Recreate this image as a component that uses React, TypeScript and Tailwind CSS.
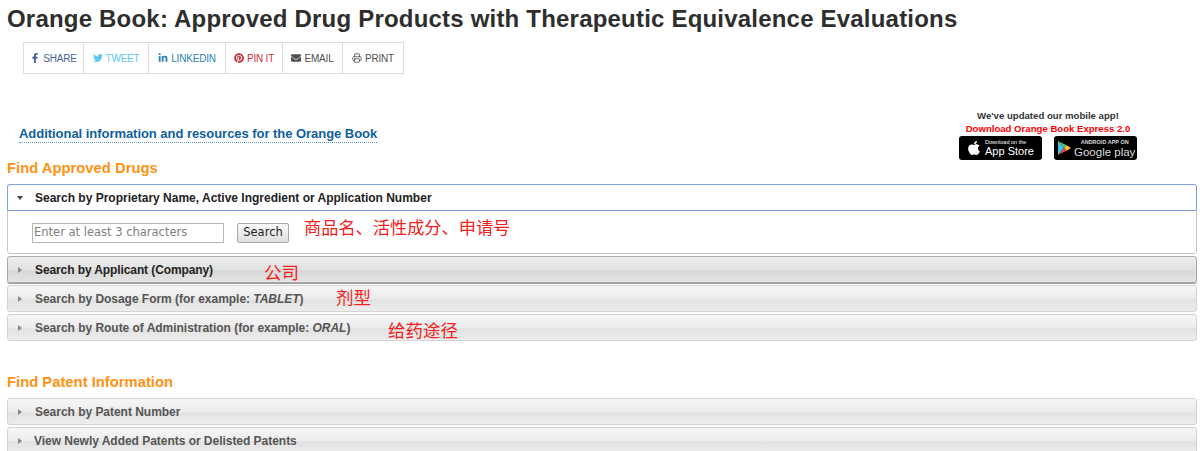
import React from "react";
import { FaApple, FaEnvelope, FaFacebookF, FaLinkedinIn, FaPinterest, FaTwitter } from "react-icons/fa";
import { Printer } from "lucide-react";

const shares = [
  { label: "SHARE", icon: FaFacebookF, color: "text-[#4a6096]", width: "w-[59px]" },
  { label: "TWEET", icon: FaTwitter, color: "text-[#5ec8f0]", width: "w-[65px]" },
  { label: "LINKEDIN", icon: FaLinkedinIn, color: "text-[#2a7fb5]", width: "w-[77px]" },
  { label: "PIN IT", icon: FaPinterest, color: "text-[#cb2f3a]", width: "w-[57px]" },
  { label: "EMAIL", icon: FaEnvelope, color: "text-[#505050]", width: "w-[60px]" },
  { label: "PRINT", icon: Printer, color: "text-[#505050]", width: "w-[61px]" },
];

const Row = ({ children, note, noteClass, hover }: { children: React.ReactNode; note?: string; noteClass?: string; hover?: boolean }) => (
  <div
    className={`relative flex h-[27px] items-center rounded-[3px] border pl-[10px] text-[12px] font-bold tracking-[-0.03px] ${
      hover
        ? "border-[#aaaaaa] bg-[linear-gradient(#ececec_0%,#e2e2e2_50%,#d8d8d8_55%,#e4e4e4_100%)] text-[#222222] shadow-[0_1px_0_#999999]"
        : "border-[#d3d3d3] bg-[linear-gradient(#f6f6f6_0%,#ececec_50%,#e2e2e2_55%,#ededed_100%)] text-[#555555]"
    }`}
  >
    <span className="mr-[13px] h-0 w-0 border-y-[3.5px] border-l-[4px] border-y-transparent border-l-[#888888]" />
    {children}
    {note && <span className={`absolute font-['Noto_Sans_CJK_SC',sans-serif] text-[17.5px] font-normal leading-none text-[#f42020] ${noteClass}`}>{note}</span>}
  </div>
);

export default function App() {
  return (
    <div className="h-[451px] overflow-hidden bg-white pl-[7px] pr-[3px] font-['Liberation_Sans',sans-serif] text-[#333333]">
      <h1 className="pt-[5px] text-[24px] font-bold leading-[28px] tracking-[0.2px] text-[#2e2e2e]">
        Orange Book: Approved Drug Products with Therapeutic Equivalence Evaluations
      </h1>

      <div className="ml-[16px] mt-[9px] flex h-[32px] w-[381px] border border-[#dddddd]">
        {shares.map((s, i) => (
          <div key={s.label} className={`flex items-center justify-center gap-[3px] text-[10px] tracking-[-0.2px] ${s.color} ${s.width} ${i > 0 ? "border-l border-[#dddddd]" : ""}`}>
            <s.icon className="h-[10px] w-[10px]" />
            <span>{s.label}</span>
          </div>
        ))}
      </div>

      <div className="flex items-start justify-between">
        <a className="ml-[12px] mt-[51px] border-b border-dotted border-[#5c9bd1] text-[13px] font-bold leading-[17px] tracking-[-0.04px] text-[#0f5f9e]">
          Additional information and resources for the Orange Book
        </a>
        <div className="mr-[60px] mt-[35px] flex w-[178px] flex-col items-center text-[9.6px] font-bold leading-[13px]">
          <div className="text-[#333333]">We've updated our mobile app!</div>
          <div className="text-[#ff0000]">Download Orange Book Express 2.0</div>
          <div className="mt-[1px] flex gap-[12px]">
            <div className="flex h-[24px] w-[83px] items-center gap-[3px] rounded-[3px] bg-black pl-[7px] text-white">
              <FaApple className="text-[16px]" />
              <div className="flex flex-col">
                <span className="text-[5.5px] font-normal leading-[7px]">Download on the</span>
                <span className="text-[11px] font-normal leading-[11px]">App Store</span>
              </div>
            </div>
            <div className="flex h-[24px] w-[83px] items-center gap-[3px] rounded-[3px] bg-black pl-[3px] text-[#dddddd]">
              <svg width="14" height="16" viewBox="0 0 14 16" className="shrink-0">
                <path d="M1 1 L7 8 L1 15 Z" fill="#3bc4e8" />
                <path d="M1 1 L10 5.5 L7 8 Z" fill="#5bc26a" />
                <path d="M1 15 L10 10.5 L7 8 Z" fill="#e8424c" />
                <path d="M10 5.5 L14 8 L10 10.5 L7 8 Z" fill="#f9c23c" />
              </svg>
              <div className="flex flex-col items-center whitespace-nowrap">
                <span className="text-[5.5px] leading-[7px]">ANDROID APP ON</span>
                <span className="text-[11.5px] font-normal leading-[12px]">Google play</span>
              </div>
            </div>
          </div>
        </div>
      </div>

      <h2 className="mt-[-1px] text-[14.8px] font-bold leading-[18px] text-[#ff9215]">Find Approved Drugs</h2>

      <div className="mt-[7px] rounded-[3px] border border-[#c4c4c4]">
        <div className="m-[-1px] flex h-[27px] items-center rounded-t-[3px] border border-[#7f9fe0] bg-white pl-[9px] text-[12px] font-bold text-[#222222]">
          <span className="mr-[12px] h-0 w-0 border-x-[3.5px] border-t-[4px] border-x-transparent border-t-[#444444]" />
          Search by Proprietary Name, Active Ingredient or Application Number
        </div>
        <div className="relative flex h-[43px] items-center pl-[24px] pt-[3px]">
          <div className="flex h-[20px] w-[192px] items-center border border-[#b5b5b5] pl-[1px] font-['DejaVu_Sans',sans-serif] text-[11.5px] text-[#808080]">
            Enter at least 3 characters
          </div>
          <div className="ml-[13px] flex h-[20px] w-[52px] items-center justify-center rounded-[2px] border border-[#aaaaaa] bg-[linear-gradient(#fafafa,#dedede)] font-['DejaVu_Sans',sans-serif] text-[11.5px] text-[#222222]">
            Search
          </div>
          <span className="absolute left-[296px] top-[8px] font-['Noto_Sans_CJK_SC',sans-serif] text-[17.2px] leading-none text-[#f42020]">
            商品名、活性成分、申请号
          </span>
        </div>
      </div>

      <div className="mt-[2px] flex flex-col gap-[2px]">
        <Row hover note="公司" noteClass="left-[256px] top-[6px]">
          <span className="tracking-[-0.1px]">Search by Applicant (Company)</span>
        </Row>
        <Row note="剂型" noteClass="left-[328px] top-[2px]">
          <span>Search by Dosage Form (for example: <i>TABLET</i>)</span>
        </Row>
        <Row note="给药途径" noteClass="left-[380px] top-[6px]">
          <span>Search by Route of Administration (for example: <i>ORAL</i>)</span>
        </Row>
      </div>

      <h2 className="mt-[32px] text-[14.8px] font-bold leading-[18px] text-[#ff9215]">Find Patent Information</h2>

      <div className="mt-[7px] flex flex-col gap-[2px]">
        <Row>Search by Patent Number</Row>
        <Row>
          <span className="-ml-px">View Newly Added Patents or Delisted Patents</span>
        </Row>
      </div>
    </div>
  );
}
